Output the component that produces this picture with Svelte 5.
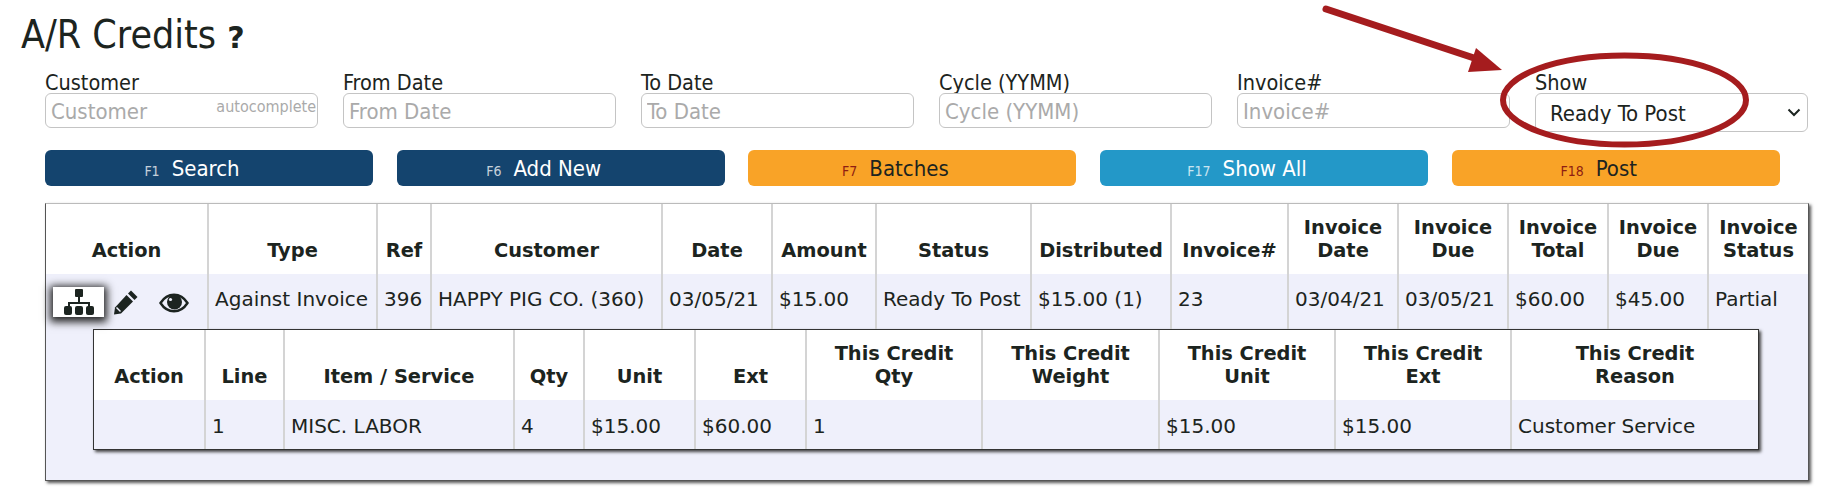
<script>
  const fields = [
    { label: 'Customer', hint: 'autocomplete' },
    { label: 'From Date' },
    { label: 'To Date' },
    { label: 'Cycle (YYMM)' },
    { label: 'Invoice#' }
  ];

  const buttons = [
    { key: 'F1', text: 'Search', kind: 'navy' },
    { key: 'F6', text: 'Add New', kind: 'navy' },
    { key: 'F7', text: 'Batches', kind: 'orange' },
    { key: 'F17', text: 'Show All', kind: 'blue' },
    { key: 'F18', text: 'Post', kind: 'orange' }
  ];

  const outerWidths = [162, 169, 54, 231, 110, 104, 155, 140, 117, 110, 110, 100, 100, 100];
  const outerHead = ['Action', 'Type', 'Ref', 'Customer', 'Date', 'Amount', 'Status', 'Distributed', 'Invoice#', 'Invoice Date', 'Invoice Due', 'Invoice Total', 'Invoice Due', 'Invoice Status'];
  const outerRow = ['Against Invoice', '396', 'HAPPY PIG CO. (360)', '03/05/21', '$15.00', 'Ready To Post', '$15.00 (1)', '23', '03/04/21', '03/05/21', '$60.00', '$45.00', 'Partial'];

  const innerWidths = [111, 79, 230, 70, 111, 111, 176, 177, 176, 176, 247];
  const innerHead = ['Action', 'Line', 'Item / Service', 'Qty', 'Unit', 'Ext', 'This Credit Qty', 'This Credit Weight', 'This Credit Unit', 'This Credit Ext', 'This Credit Reason'];
  const innerRow = ['', '1', 'MISC. LABOR', '4', '$15.00', '$60.00', '1', '', '$15.00', '$15.00', 'Customer Service'];
</script>

<div class="page">
  <h1>A/R Credits <span class="help">?</span></h1>

  <div class="filters">
    {#each fields as f}
      <label class="field">
        <span class="cap">{f.label}</span>
        <input placeholder={f.label} />
        {#if f.hint}<span class="hint">{f.hint}</span>{/if}
      </label>
    {/each}
    <label class="field">
      <span class="cap">Show</span>
      <select>
        <option>Ready To Post</option>
      </select>
      <svg class="chev" width="14" height="9" viewBox="0 0 14 9" fill="none">
        <path d="M1.500 1.500L7 7l5.500-5.500" stroke="#1c2420" stroke-width="2" />
      </svg>
    </label>
  </div>

  <div class="buttons">
    {#each buttons as b}
      <button class={b.kind}><small>{b.key}</small>{b.text}</button>
    {/each}
  </div>

  <div class="outer">
    <table>
      <colgroup>
        {#each outerWidths as w}
          <col style="width: {w}px" />
        {/each}
      </colgroup>
      <thead>
        <tr>
          {#each outerHead as h}<th>{h}</th>{/each}
        </tr>
      </thead>
      <tbody>
        <tr>
          <td class="actions">
            <span class="tree">
              <svg width="30" height="26" viewBox="0 0 30 26" fill="#1c2420">
                <rect x="11" y="0" width="8" height="8" rx="1" />
                <rect x="14" y="8" width="2" height="6" />
                <path d="M4 17v-4h22v4h-2v-2H6v2z" />
                <rect x="0" y="17" width="8" height="9" rx="2" />
                <rect x="11" y="17" width="8" height="9" rx="2" />
                <rect x="22" y="17" width="8" height="9" rx="2" />
              </svg>
            </span>
            <svg class="pencil" width="26" height="26" viewBox="0 0 26 26" fill="#1c2420">
              <path d="M18 1.500l6.500 6.500-3 3L15 4.500z" />
              <path d="M13.500 6l6.500 6.500L8 24.500 1 25.500l1-7z" />
              <path d="M3.500 18.500l4 4" stroke="#eff0fb" stroke-width="1.500" />
            </svg>
            <svg class="eye" width="30" height="20" viewBox="0 0 30 20">
              <path d="M1.500 10C5 4.500 9.500 1.800 15 1.800S25 4.500 28.500 10C25 15.500 20.500 18.200 15 18.200S5 15.500 1.500 10z" fill="none" stroke="#1c2420" stroke-width="2.400" />
              <circle cx="15.500" cy="9" r="7.500" fill="#1c2420" />
              <circle cx="11.500" cy="6.500" r="1.600" fill="#eff0fb" />
            </svg>
          </td>
          {#each outerRow as c}<td>{c}</td>{/each}
        </tr>
        <tr>
          <td class="nest" colspan={outerHead.length}>
            <div class="inner">
              <table>
                <colgroup>
                  {#each innerWidths as w}<col style="width: {w}px" />{/each}
                </colgroup>
                <thead>
                  <tr>
                    {#each innerHead as h}<th>{h}</th>{/each}
                  </tr>
                </thead>
                <tbody>
                  <tr>
                    {#each innerRow as c}<td>{c}</td>{/each}
                  </tr>
                </tbody>
              </table>
            </div>
          </td>
        </tr>
      </tbody>
    </table>
  </div>

  <!-- annotation drawn on top of the screenshot -->
  <svg class="markup" width="1843" height="499" viewBox="0 0 1843 499" fill="none">
    <path d="M1326 9L1480 60" stroke="#a51c1e" stroke-width="7" stroke-linecap="round" />
    <path d="M1476 48L1502 70L1468 72z" fill="#a51c1e" />
    <ellipse cx="1624.500" cy="100" rx="121.500" ry="44.500" stroke="#a51c1e" stroke-width="6" />
  </svg>
</div>

<style>
  :global(body) {
    background: #fff;
    color: #1c2420;
    font-family: "DejaVu Sans", Verdana, sans-serif;
  }
  .page {
    position: relative;
    width: 1843px;
    height: 499px;
    overflow: hidden;
  }
  h1 {
    margin: 0;
    padding: 12px 0 0 21px;
    height: 72px;
    box-sizing: border-box;
    font: 400 39px/46px "DejaVu Sans Condensed", "DejaVu Sans", sans-serif;
  }
  .help {
    font: 700 30px/1 "DejaVu Sans", sans-serif;
  }
  .filters {
    display: grid;
    grid-template-columns: repeat(6, 273px);
    column-gap: 25px;
    padding-left: 45px;
    height: 78px;
    align-items: start;
  }
  .field {
    position: relative;
    display: flex;
    flex-direction: column;
    font: 400 21.500px/21px "DejaVu Sans Condensed", "DejaVu Sans", sans-serif;
  }
  .cap {
    height: 21px;
  }
  input {
    box-sizing: border-box;
    width: 273px;
    height: 35px;
    padding: 2px 5px 0;
    border: 1px solid #c4c4c4;
    border-radius: 6px;
    font: inherit;
    font-size: 22px;
    background: #fff;
    outline: none;
  }
  input::placeholder {
    color: #aaa;
    opacity: 1;
  }
  .hint {
    position: absolute;
    right: 2px;
    top: 24px;
    font-size: 16px;
    color: #aaa;
  }
  select {
    box-sizing: border-box;
    width: 273px;
    height: 39px;
    padding: 2px 14px 0;
    border: 1px solid #c4c4c4;
    border-radius: 6px;
    background: #fff;
    color: #1c2420;
    font: inherit;
    font-size: 22px;
    appearance: none;
  }
  .chev {
    position: absolute;
    right: 7px;
    top: 36px;
  }
  .buttons {
    display: grid;
    grid-template-columns: repeat(5, 328px);
    column-gap: 23.700px;
    padding-left: 45px;
  }
  button {
    height: 36px;
    border: 0;
    border-radius: 6px;
    padding: 1px 34px 0 0;
    font: 400 22px/36px "DejaVu Sans Condensed", "DejaVu Sans", sans-serif;
    color: #fff;
  }
  button small {
    font-size: 14px;
    margin-right: 12px;
    opacity: 0.75;
  }
  .navy { background: #14446e; }
  .blue { background: #2398c8; }
  .orange {
    background: #f9a327;
    color: #1c2420;
  }
  .orange small {
    color: #8f1d12;
    opacity: 1;
  }
  .outer {
    box-sizing: border-box;
    width: 1764px;
    height: 278px;
    margin: 17px 0 0 45px;
    background: #eff0fb;
    border: 1px solid #555;
    border-top-color: #bbb;
    box-shadow: 2px 2px 3px #555;
  }
  table {
    table-layout: fixed;
    border-collapse: collapse;
    width: 100%;
  }
  th, td {
    border-left: 2px solid #d4d4d4;
    padding: 0 6px;
    line-height: 23px;
    white-space: normal;
  }
  th:first-child, td:first-child {
    border-left: 0;
  }
  th {
    height: 70px;
    background: #fff;
    font-size: 19.400px;
    font-weight: 700;
    text-align: center;
    vertical-align: bottom;
    padding: 0 2px 12px;
    box-sizing: border-box;
  }
  td {
    height: 55px;
    padding-bottom: 5px;
    box-sizing: border-box;
    background: #eff0fb;
    font-size: 20px;
    font-weight: 400;
    text-align: left;
    white-space: nowrap;
  }
  .inner td {
    height: 49px;
    padding-bottom: 0;
    padding-top: 3px;
  }
  .inner th {
    padding: 0 12px 12px;
  }
  .inner th:last-child {
    padding: 0 40px 12px;
  }
  .actions {
    padding: 0;
    position: relative;
  }
  .tree {
    position: absolute;
    left: 7px;
    top: 13px;
    width: 51px;
    height: 30px;
    background: #fff;
    box-shadow: 0 2px 8px 3px #222;
    display: flex;
    align-items: center;
    justify-content: center;
  }
  .pencil {
    position: absolute;
    left: 67px;
    top: 15px;
  }
  .eye {
    position: absolute;
    left: 113px;
    top: 19px;
  }
  td.nest {
    height: auto;
    padding: 0 49px 30px 47px;
    border: 0;
    vertical-align: top;
  }
  .inner {
    background: #eff0fb;
    border: 1px solid #333;
    box-shadow: 2px 2px 3px #444;
  }
  .markup {
    position: absolute;
    left: 0;
    top: 0;
    pointer-events: none;
  }
</style>
